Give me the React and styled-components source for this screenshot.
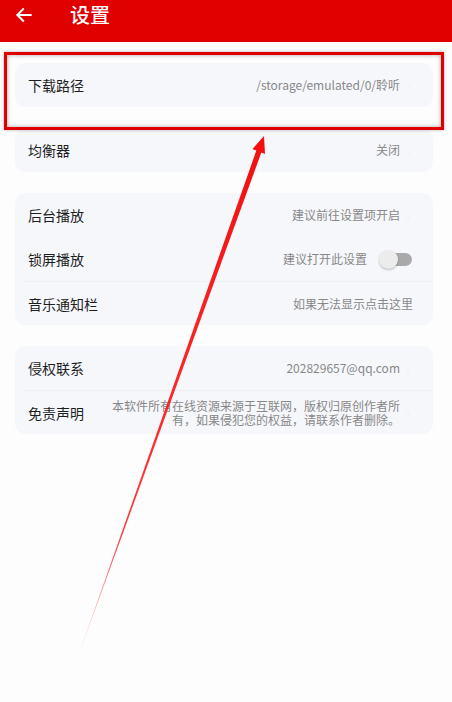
import styled, { createGlobalStyle } from 'styled-components';

const Global = createGlobalStyle`
  html, body {
    margin: 0;
    padding: 0;
    background: #fdfdfd;
    font-family: "Noto Sans CJK SC", "Noto Sans", sans-serif;
  }
`;

const Page = styled.div`
  position: relative;
  width: 452px;
  height: 702px;
  overflow: hidden;
  background: #fdfdfd;
`;

const Header = styled.header`
  height: 42px;
  background: #e00000;
  display: flex;
  align-items: flex-start;
  padding: 3px 0 0 14px;
  box-sizing: border-box;
  gap: 36px;
`;

const Title = styled.h1`
  margin: 0;
  color: #fff;
  font-size: 20px;
  font-weight: 500;
  line-height: 24px;
`;

const Back = styled.svg`
  width: 20px;
  height: 20px;
  margin-top: 2px;
`;

const Body = styled.main`
  display: flex;
  flex-direction: column;
  gap: 21px;
  padding: 21px 19px 0 15px;
`;

const Card = styled.section`
  background: #f6f7fb;
  border-radius: 10px;
  display: flex;
  flex-direction: column;
`;

const Row = styled.div`
  height: ${p => p.h || 44}px;
  display: flex;
  align-items: center;
  padding: 0 ${p => (p.tight ? 20 : 17)}px 0 13px;
  margin-left: ${p => (p.line ? 10 : 0)}px;
  padding-left: ${p => (p.line ? 3 : 13)}px;
  border-top: ${p => (p.line ? '1px solid #eceef2' : 'none')};
  box-sizing: border-box;
`;

const Label = styled.span`
  font-size: 14px;
  color: #1e1e1e;
  flex-shrink: 0;
`;

const Value = styled.span`
  margin-left: auto;
  font-size: 12px;
  color: #888;
  text-align: right;
  line-height: 14px;
`;

const Chevron = styled.span`
  width: 10px;
  margin-left: 6px;
  color: #eef0f3;
  font-size: 12px;
`;

const Toggle = styled.span`
  position: relative;
  width: 32px;
  height: 13px;
  border-radius: 7px;
  background: #a9a9a9;
  margin-left: 13px;
  margin-right: 4px;
  &::after {
    content: '';
    position: absolute;
    left: -1px;
    top: -3px;
    width: 19px;
    height: 19px;
    border-radius: 50%;
    background: #ececec;
    box-shadow: 0 1px 2px rgba(0, 0, 0, 0.25);
  }
`;

const Highlight = styled.div`
  position: absolute;
  left: 4px;
  top: 52px;
  width: 440px;
  height: 78px;
  box-sizing: border-box;
  border: 3px solid #e00000;
  box-shadow: inset 0 0 4px rgba(0, 0, 0, 0.35), 0 0 3px rgba(0, 0, 0, 0.3);
  pointer-events: none;
`;

const Overlay = styled.svg`
  position: absolute;
  left: 0;
  top: 0;
  pointer-events: none;
`;

const Item = ({ label, value, chevron = true, toggle, ...rest }) => (
  <Row {...rest}>
    <Label>{label}</Label>
    <Value>{value}</Value>
    {toggle && <Toggle />}
    {chevron && !toggle && <Chevron>›</Chevron>}
  </Row>
);

export default function App() {
  return (
    <Page>
      <Global />
      <Header>
        <Back viewBox="0 0 24 24" fill="none" stroke="#fff" strokeWidth="2.4" strokeLinecap="square">
          <path d="M20 12H5M11 5l-7 7 7 7" />
        </Back>
        <Title>设置</Title>
      </Header>
      <Body>
        <Card>
          <Item label="下载路径" value="/storage/emulated/0/聆听" />
        </Card>
        <Card>
          <Item label="均衡器" value="关闭" />
        </Card>
        <Card>
          <Item label="后台播放" value="建议前往设置项开启" />
          <Item label="锁屏播放" value="建议打开此设置" toggle />
          <Item label="音乐通知栏" value="如果无法显示点击这里" chevron={false} line tight />
        </Card>
        <Card>
          <Item label="侵权联系" value="202829657@qq.com" />
          <Item
            label="免责声明"
            line
            value={
              <>
                本软件所有在线资源来源于互联网，版权归原创作者所
                <br />
                有，如果侵犯您的权益，请联系作者删除。
              </>
            }
          />
        </Card>
      </Body>
      <Highlight />
      <Overlay width="452" height="702" viewBox="0 0 452 702">
        <defs>
          <linearGradient id="fade" x1="75" y1="665" x2="262" y2="140" gradientUnits="userSpaceOnUse">
            <stop offset="0" stopColor="#ff2020" stopOpacity="0" />
            <stop offset="0.25" stopColor="#ff2020" stopOpacity="0.9" />
            <stop offset="1" stopColor="#f01010" />
          </linearGradient>
        </defs>
        <polygon points="75,665 256.5,150 261.5,152" fill="url(#fade)" />
        <polygon points="264,136 252.5,149 265,154" fill="#f01010" />
      </Overlay>
    </Page>
  );
}
